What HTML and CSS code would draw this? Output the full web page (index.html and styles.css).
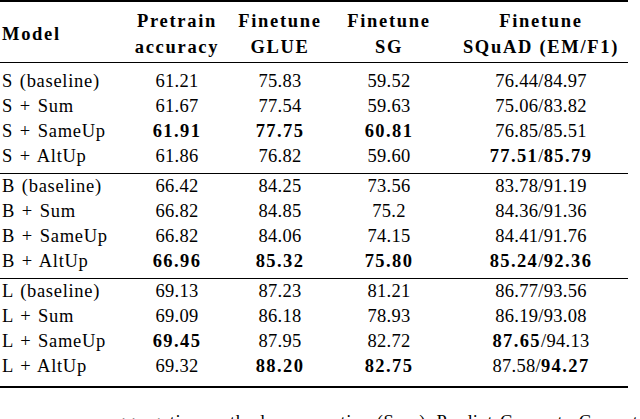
FILE: index.html
```html
<!DOCTYPE html>
<html lang="en">
<head>
    <meta charset="UTF-8">
    <meta name="viewport" content="width=device-width, initial-scale=1.0">
    <title>Results</title>
    <link rel="stylesheet" href="styles.css">
</head>
<body>
    <table class="results">
        <colgroup>
            <col class="c-model">
            <col class="c-pre">
            <col class="c-glue">
            <col class="c-sg">
            <col class="c-squad">
        </colgroup>
        <thead>
            <tr>
                <th class="model">Model</th>
                <th>Pretrain<br>accuracy</th>
                <th>Finetune<br>GLUE</th>
                <th class="sg">Finetune<br>SG</th>
                <th>Finetune<br>SQuAD (EM/F1)</th>
            </tr>
        </thead>

        <!-- small -->
        <tbody class="group group-s">
            <tr>
                <td class="name">S (baseline)</td>
                <td>61.21</td>
                <td>75.83</td>
                <td class="sg">59.52</td>
                <td>76.44/84.97</td>
            </tr>
            <tr>
                <td class="name">S + Sum</td>
                <td>61.67</td>
                <td>77.54</td>
                <td class="sg">59.63</td>
                <td>75.06/83.82</td>
            </tr>
            <tr>
                <td class="name">S + SameUp</td>
                <td><b>61.91</b></td>
                <td><b>77.75</b></td>
                <td class="sg"><b>60.81</b></td>
                <td>76.85/85.51</td>
            </tr>
            <tr>
                <td class="name">S + AltUp</td>
                <td>61.86</td>
                <td>76.82</td>
                <td class="sg">59.60</td>
                <td><b>77.51</b>/<b>85.79</b></td>
            </tr>
        </tbody>

        <!-- base -->
        <tbody class="group group-b">
            <tr>
                <td class="name">B (baseline)</td>
                <td>66.42</td>
                <td>84.25</td>
                <td class="sg">73.56</td>
                <td>83.78/91.19</td>
            </tr>
            <tr>
                <td class="name">B + Sum</td>
                <td>66.82</td>
                <td>84.85</td>
                <td class="sg">75.2</td>
                <td>84.36/91.36</td>
            </tr>
            <tr>
                <td class="name">B + SameUp</td>
                <td>66.82</td>
                <td>84.06</td>
                <td class="sg">74.15</td>
                <td>84.41/91.76</td>
            </tr>
            <tr>
                <td class="name">B + AltUp</td>
                <td><b>66.96</b></td>
                <td><b>85.32</b></td>
                <td class="sg"><b>75.80</b></td>
                <td><b>85.24</b>/<b>92.36</b></td>
            </tr>
        </tbody>

        <!-- large -->
        <tbody class="group group-l">
            <tr>
                <td class="name">L (baseline)</td>
                <td>69.13</td>
                <td>87.23</td>
                <td class="sg">81.21</td>
                <td>86.77/93.56</td>
            </tr>
            <tr>
                <td class="name">L + Sum</td>
                <td>69.09</td>
                <td>86.18</td>
                <td class="sg">78.93</td>
                <td>86.19/93.08</td>
            </tr>
            <tr>
                <td class="name">L + SameUp</td>
                <td><b>69.45</b></td>
                <td>87.95</td>
                <td class="sg">82.72</td>
                <td><b>87.65</b>/94.13</td>
            </tr>
            <tr>
                <td class="name">L + AltUp</td>
                <td>69.32</td>
                <td><b>88.20</b></td>
                <td class="sg"><b>82.75</b></td>
                <td>87.58/<b>94.27</b></td>
            </tr>
        </tbody>
    </table>

    <p class="caption">aggregation methods: summation (Sum), Predict-Compute-Correct</p>
</body>
</html>
```

FILE: styles.css
```css
html,
body {
    margin: 0;
    overflow: hidden;
    background-color: #fff;
}

body {
    font-family: "Liberation Serif", "Times New Roman", serif;
    font-size: 18.5px;
    color: #000;
}

.results {
    width: 628px;
    table-layout: fixed;
    border-collapse: separate;
    border-spacing: 0;
    border-top: 2px solid #000;
    border-bottom: 2px solid #000;
}

.c-model { width: 125px; }
.c-pre { width: 104px; }
.c-glue { width: 102px; }
.c-sg { width: 123px; }
.c-squad { width: 174px; }

.results th {
    font-weight: bold;
    letter-spacing: 1.7px;
    line-height: 26px;
    padding: 6px 0 2px;
    border-bottom: 1px solid #000;
    text-align: center;
    vertical-align: middle;
    white-space: nowrap;
}

.results th.model {
    text-align: left;
    padding-left: 2px;
}

.results td {
    padding: 0;
    line-height: 25px;
    text-align: center;
    letter-spacing: 0.3px;
    white-space: nowrap;
}

.results td.name {
    text-align: left;
    padding-left: 2px;
    letter-spacing: 0.7px;
    word-spacing: 1.5px;
}

.results .sg {
    padding-right: 7px;
}

.results b {
    letter-spacing: 1.4px;
}

/* spacing around the group rules */
.group-s tr:first-child td {
    padding-top: 6px;
}

.group-s tr:last-child td,
.group-b tr:last-child td {
    padding-bottom: 4px;
}

.group-b tr:first-child td,
.group-l tr:first-child td {
    border-top: 1px solid #000;
}

.group-l tr:last-child td {
    padding-bottom: 7px;
}

/* caption runs past the bottom edge, only its top shows */
.caption {
    margin: 22px 0 0;
    padding-left: 107px;
    line-height: 25px;
    letter-spacing: 0.6px;
    white-space: nowrap;
}
```
